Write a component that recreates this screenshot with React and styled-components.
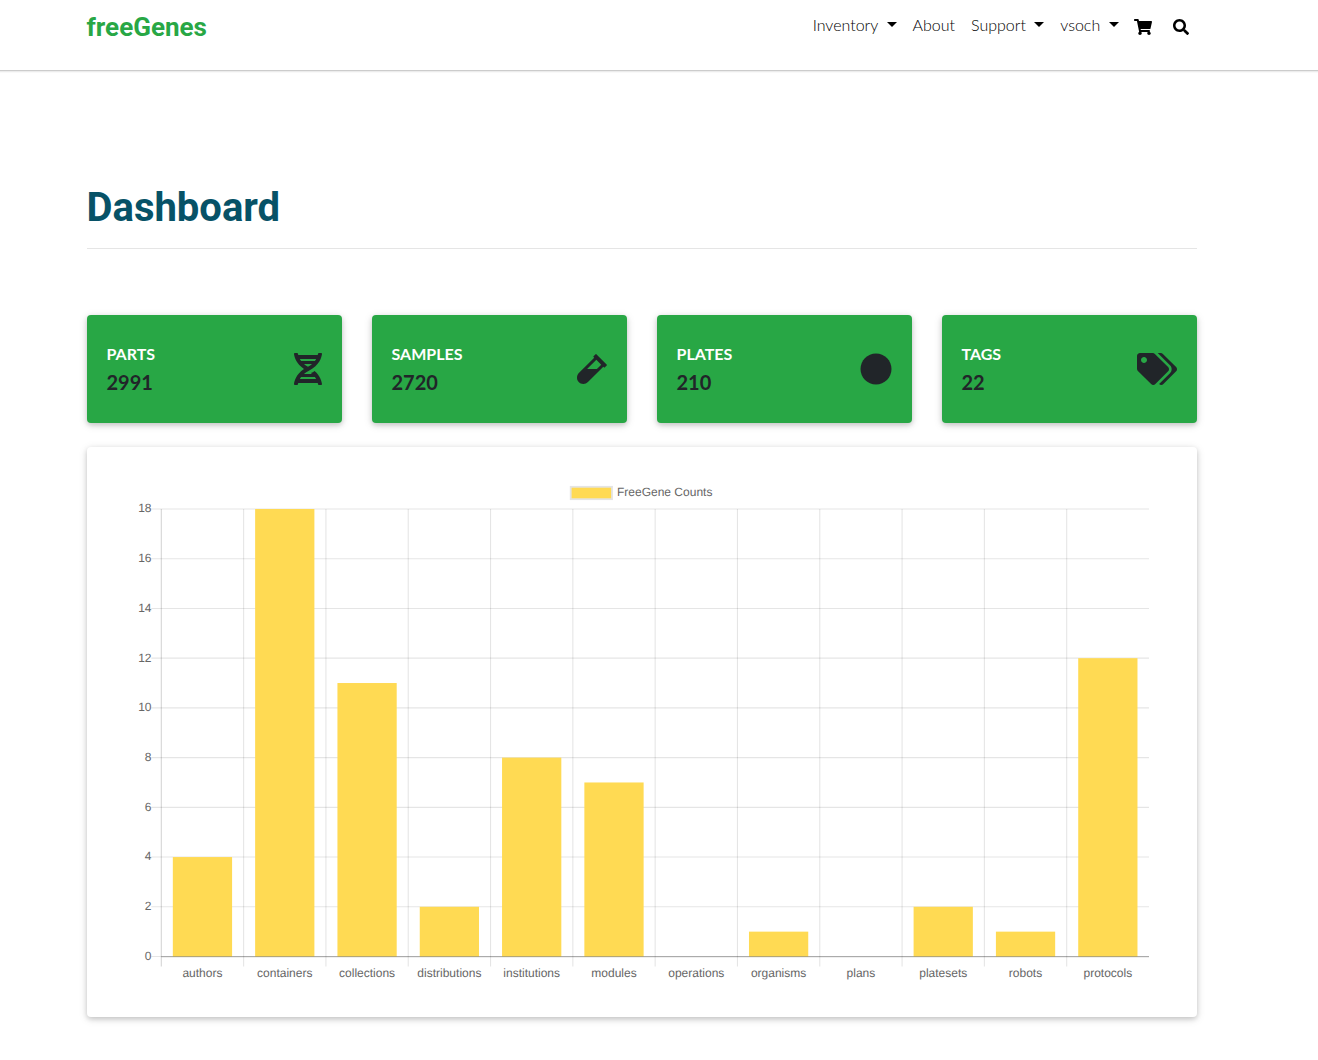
import React from "react";
import styled, { createGlobalStyle } from "styled-components";
import { FaDna, FaVial, FaCircle, FaTags, FaShoppingCart, FaSearch } from "react-icons/fa";

const GlobalStyle = createGlobalStyle`
  *, *::before, *::after { box-sizing: border-box; }
  body {
    margin: 0;
    background: #fff;
    color: #212529;
    font-family: Lato, "Liberation Sans", sans-serif;
    font-size: 16px;
    line-height: 1.5;
  }
`;

const Header = styled.header`
  display: flex;
  justify-content: space-between;
  align-items: flex-start;
  height: 70px;
  padding: 0 121px 0 87px;
  box-shadow: 0 1px 0 #ccc, 0 2px 0 #ececec, 0 3px 0 #f9f9f9;
`;

const Brand = styled.a`
  margin: 8px 0 0 -0.5px;
  color: #28a745;
  font-family: Roboto, sans-serif;
  font-size: 26px;
  font-weight: 700;
  line-height: 39px;
`;

const Nav = styled.nav`
  display: flex;
  padding-top: 13px;
`;

const NavLink = styled.a`
  display: flex;
  padding: 0 8px;
  color: #000;
  font-weight: 300;
  white-space: nowrap;
`;

const Caret = styled.span`
  width: 10px;
  height: 5px;
  margin: 9px 0 0 8.3px;
  border: 5px solid transparent;
  border-top-color: #000;
  border-bottom: 0;
`;

const NavIcon = styled.a`
  display: flex;
  padding: 6px ${(p) => p.$right || 8}px 0 ${(p) => p.$left || 8}px;
  color: #000;

  svg {
    width: ${(p) => p.$width}px;
    height: 16px;
  }
`;

const Main = styled.main`
  width: 1110px;
  margin-left: 87px;
  padding: 114px 0 43px;
`;

const Title = styled.h1`
  margin: 0;
  padding-bottom: 16px;
  border-bottom: 1px solid #e5e5e5;
  color: #075267;
  font-family: Roboto, sans-serif;
  font-size: 40px;
  font-weight: 700;
  line-height: 48px;
  text-indent: -0.5px;
`;

const Stats = styled.section`
  display: grid;
  grid-template-columns: repeat(4, 1fr);
  gap: 30px;
  margin-top: 66px;
`;

const cardShadow = "0 2px 5px rgba(0, 0, 0, 0.16), 0 2px 10px rgba(0, 0, 0, 0.12)";

const StatCard = styled.article`
  display: flex;
  align-items: center;
  justify-content: space-between;
  height: 108px;
  padding: 0 20px 0 19.5px;
  border-radius: 4px;
  background: #28a745;
  box-shadow: ${cardShadow};
`;

const StatLabel = styled.div`
  color: #fff;
  font-size: 16px;
  font-weight: 700;
  line-height: 24px;
`;

const StatValue = styled.div`
  margin-top: 2px;
  font-size: 20px;
  font-weight: 700;
  line-height: 28px;
`;

const StatIcon = styled.span`
  display: flex;

  svg {
    width: ${(p) => p.$width}px;
    height: 32px;
  }
`;

const ChartCard = styled.section`
  height: 570px;
  margin-top: 24px;
  padding: 20px;
  border-radius: 4px;
  background: #fff;
  box-shadow: ${cardShadow};
`;

const ChartSvg = styled.svg`
  display: block;
  width: 1070px;
  height: 530px;

  text {
    fill: #666;
    font-family: "Liberation Sans", Arial, sans-serif;
    font-size: 12px;
    text-rendering: geometricPrecision;
  }
`;

const STATS = [
  { label: "PARTS", value: 2991, icon: FaDna, width: 28 },
  { label: "SAMPLES", value: 2720, icon: FaVial, width: 30 },
  { label: "PLATES", value: 210, icon: FaCircle, width: 32 },
  { label: "TAGS", value: 22, icon: FaTags, width: 40 },
];

const COUNTS = [
  ["authors", 4],
  ["containers", 18],
  ["collections", 11],
  ["distributions", 2],
  ["institutions", 8],
  ["modules", 7],
  ["operations", 0],
  ["organisms", 1],
  ["plans", 0],
  ["platesets", 2],
  ["robots", 1],
  ["protocols", 12],
];

const LEFT = 54.3;
const RIGHT = 1042;
const TOP = 42;
const BOTTOM = 489.5;
const MAX = 18;
const STEP = (RIGHT - LEFT) / COUNTS.length;
const BAR = STEP * 0.72;
const yOf = (v) => BOTTOM - (v / MAX) * (BOTTOM - TOP);

function CountsChart() {
  const ticks = Array.from({ length: 10 }, (_, i) => i * 2);
  return (
    <ChartSvg viewBox="0 0 1070 530">
      <rect x="463.7" y="19.8" width="41.3" height="12.4" fill="#ffda53" stroke="#e4e4e4" strokeWidth="1.8" />
      <text x="510" y="29.3">FreeGene Counts</text>
      {ticks.map((t) => (
        <g key={t}>
          <line
            x1={LEFT - 10} x2={RIGHT} y1={yOf(t)} y2={yOf(t)}
            stroke="#000" strokeOpacity="0.1" strokeWidth="1.1"
          />
          <text x={LEFT - 9.8} y={yOf(t) + 3.4} textAnchor="end">{t}</text>
        </g>
      ))}
      {COUNTS.map(([name], i) => (
        <line
          key={name} x1={LEFT + i * STEP} x2={LEFT + i * STEP} y1={TOP} y2={BOTTOM + 10}
          stroke="#000" strokeOpacity={i === 0 ? 0.17 : 0.1} strokeWidth="1.1"
        />
      ))}
      {COUNTS.map(([name, v], i) => (
        <g key={name}>
          <rect
            x={LEFT + (i + 0.5) * STEP - BAR / 2} y={yOf(v)}
            width={BAR} height={BOTTOM - yOf(v)} fill="#ffda53"
          />
          <text x={LEFT + (i + 0.5) * STEP} y="510" textAnchor="middle">{name}</text>
        </g>
      ))}
      <line x1={LEFT} x2={RIGHT} y1={BOTTOM + 0.2} y2={BOTTOM + 0.2} stroke="#000" strokeOpacity="0.25" strokeWidth="1.3" />
    </ChartSvg>
  );
}

export default function App() {
  return (
    <>
      <GlobalStyle />
      <Header>
        <Brand>freeGenes</Brand>
        <Nav>
          <NavLink>Inventory<Caret /></NavLink>
          <NavLink>About</NavLink>
          <NavLink>Support<Caret /></NavLink>
          <NavLink>vsoch<Caret /></NavLink>
          <NavIcon $width={18} $left={7.5} $right={13}><FaShoppingCart /></NavIcon>
          <NavIcon $width={16}><FaSearch /></NavIcon>
        </Nav>
      </Header>
      <Main>
        <Title>Dashboard</Title>
        <Stats>
          {STATS.map(({ label, value, icon: Icon, width }) => (
            <StatCard key={label}>
              <div>
                <StatLabel>{label}</StatLabel>
                <StatValue>{value}</StatValue>
              </div>
              <StatIcon $width={width}><Icon /></StatIcon>
            </StatCard>
          ))}
        </Stats>
        <ChartCard>
          <CountsChart />
        </ChartCard>
      </Main>
    </>
  );
}
